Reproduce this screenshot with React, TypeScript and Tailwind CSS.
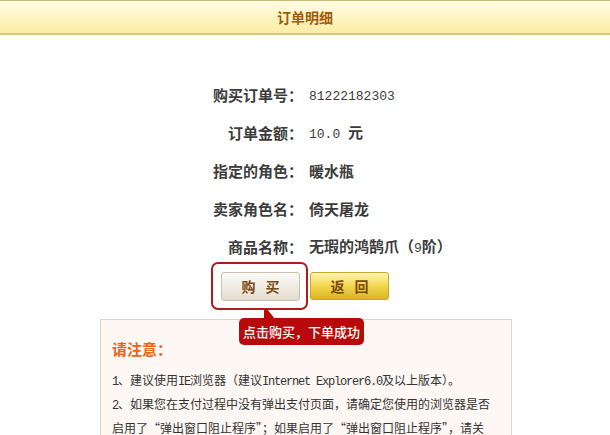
import React from "react";

const rows: [string, React.ReactNode][] = [
  ["购买订单号：", <span className="font-['Liberation_Mono',monospace] text-[13px] font-normal">81222182303</span>],
  ["订单金额：", <><span className="font-['Liberation_Mono',monospace] text-[13px] font-normal">10.0 </span>元</>],
  ["指定的角色：", "暖水瓶"],
  ["卖家角色名：", "倚天屠龙"],
  ["商品名称：", <>无瑕的鸿鹄爪（<span className="font-['Liberation_Mono',monospace] text-[13px] font-normal">9</span>阶）</>],
];

const L = ({ children }: { children: React.ReactNode }) => (
  <span className="font-['Liberation_Mono',monospace] tracking-[-1.2px]">{children}</span>
);

export default function App() {
  return (
    <div className="h-[435px] w-[610px] overflow-hidden bg-white text-[#333] font-['Noto_Sans_CJK_SC',sans-serif]">
      <div className="h-[35px] border-t border-t-[#cbbd7d] border-b-2 border-b-[#d3c78e] bg-gradient-to-b from-[#fffde4] to-[#fdeca2] flex items-center justify-center">
        <span className="text-[14px] font-bold text-[#a05a0a] leading-none">订单明细</span>
      </div>

      <div className="mt-[41px]">
        {rows.map(([label, value], i) => (
          <div key={i} className="grid grid-cols-[303px_1fr] h-[38px] items-center text-[15px] font-bold text-[#3c3c3c]">
            <div className="text-right">{label}</div>
            <div className="pl-[6px]">{value}</div>
          </div>
        ))}
      </div>

      <div className="mt-[6px] flex justify-center gap-[10px]">
        <div className="relative">
          <button className="w-[79px] h-[29px] rounded-[3px] border border-[#c9c0ae] bg-gradient-to-b from-[#fdfcfa] to-[#e4ddd0] text-[#7b4a12] font-bold text-[14px] flex items-center justify-center gap-[10px]">
            <span>购</span>
            <span>买</span>
          </button>
          <div className="absolute -left-[10px] -top-[10px] w-[97px] h-[48px] border-2 border-[#b01c1c] rounded-[7px] pointer-events-none" />
          <svg className="absolute left-[43px] top-[37px] z-10" width="12" height="10" viewBox="0 0 12 10">
            <polygon points="0,0 3,0 11,10 0,10" fill="#b80a0a" />
          </svg>
          <div className="absolute left-[18px] top-[46px] z-10 h-[27px] w-[125px] rounded-[5px] bg-[#b80a0a] text-white text-[13px] font-medium flex items-center justify-center whitespace-nowrap">
            点击购买，下单成功
          </div>
        </div>
        <button className="w-[79px] h-[28px] rounded-[3px] border border-[#c9a52a] bg-gradient-to-b from-[#fff5b0] via-[#f3d64a] to-[#dcb425] text-[#7b4a12] font-bold text-[14px] flex items-center justify-center gap-[10px]">
          <span>返</span>
          <span>回</span>
        </button>
      </div>

      <div className="ml-[100px] mt-[18px] w-[412px] border border-[#ddd5c9] bg-[#fdf8f4] pl-[11px] pr-[10px] pt-[18px] pb-[20px]">
        <div className="text-[15px] font-bold text-[#e8650f] leading-[22px]">请注意：</div>
        <div className="mt-[9px] text-[12px] leading-[22px] text-[#333]">
          <div className="whitespace-nowrap">
            <L>1</L>、建议使用<L>IE</L>浏览器（建议<L>Internet Explorer6.0</L>及以上版本）。
          </div>
          <div className="whitespace-nowrap">
            <L>2</L>、如果您在支付过程中没有弹出支付页面，请确定您使用的浏览器是否
          </div>
          <div className="whitespace-nowrap">
            启用了“弹出窗口阻止程序”；如果启用了“弹出窗口阻止程序”，请关
          </div>
        </div>
      </div>
    </div>
  );
}
